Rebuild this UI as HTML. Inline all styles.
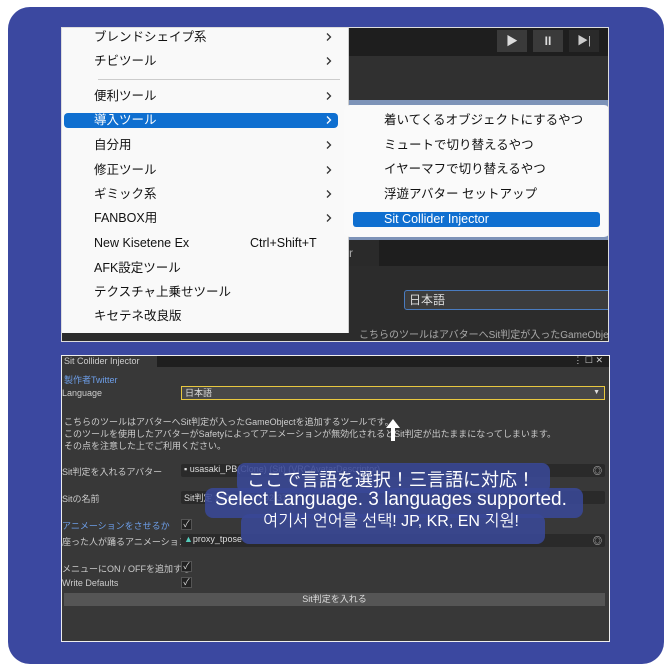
<!DOCTYPE html><html><head><meta charset="utf-8"><style>
*{margin:0;padding:0;box-sizing:border-box}
body{width:670px;height:670px;background:#fff;position:relative;overflow:hidden;font-family:"Liberation Sans","Noto Sans CJK JP",sans-serif}
.a{position:absolute}
.frame{left:8px;top:7px;width:656px;height:657px;background:#3b48a0;border-radius:22px}
.top{left:61px;top:27px;width:548px;height:315px;background:#2c2c2c;border:1px solid #ddd;overflow:hidden}
.menu{left:0;top:0;width:287px;height:305px;background:#f9f9f9;border-right:1px solid #ccc}
.mi{position:absolute;left:32px;font-size:12.5px;line-height:16px;color:#111;white-space:nowrap}
.ar{position:absolute;left:262px;width:10px;height:16px}
.sub{left:282px;top:77px;width:266px;height:132px;background:#fafafa;border-radius:6px}
.si{position:absolute;left:40px;font-size:12.5px;line-height:16px;color:#111;white-space:nowrap}
.bot{left:61px;top:355px;width:549px;height:287px;background:#383838;border:1px solid #eee;font-size:9px;color:#ccc;overflow:hidden}
.t{position:absolute;white-space:nowrap}
.field{position:absolute;left:119px;height:13px;background:#2a2a2a;border-radius:2px}
.cb{position:absolute;left:119px;width:11px;height:11px;background:#222;border:1px solid #555;font-size:9px;line-height:9px;text-align:center;color:#ddd}
.bubble{position:absolute;background:rgba(57,72,150,.88);border-radius:8px}
.bt{position:absolute;left:0;width:548px;text-align:center;color:#fff;padding-left:110px;white-space:nowrap}
</style></head><body>
<svg width="0" height="0" style="position:absolute"><defs><symbol id="chev" viewBox="0 0 10 16"><path d="M3 4.5 L6.5 8 L3 11.5" fill="none" stroke="currentColor" stroke-width="1.3"/></symbol></defs></svg>
<div class="a frame"></div>
<div class="a top">
 <div class="a" style="left:287px;top:0;width:261px;height:28px;background:#1e1e1e"></div>
 <div class="a" style="left:435px;top:2px;width:30px;height:22px;background:#3a3a3a;color:#ddd;font-size:12px;text-align:center;line-height:22px">▶</div>
 <div class="a" style="left:471px;top:2px;width:30px;height:22px;background:#3a3a3a;color:#ddd;font-size:12px;text-align:center;line-height:22px;font-weight:bold">II</div>
 <div class="a" style="left:507px;top:2px;width:30px;height:22px;background:#2a2a2a;color:#ccc;font-size:11px;text-align:center;line-height:22px">▶|</div>
 <div class="a" style="left:287px;top:28px;width:261px;height:44px;background:#303030"></div>
 <div class="a" style="left:287px;top:72px;width:261px;height:6px;background:#7d93b8"></div>
 <div class="a" style="left:287px;top:206px;width:261px;height:6px;background:#7d93b8"></div>
 <div class="a" style="left:287px;top:212px;width:30px;height:26px;background:#2a2a2a;color:#aaa;font-size:12px;line-height:26px">r</div>
 <div class="a" style="left:317px;top:212px;width:231px;height:26px;background:#1e1e1e"></div>
 <div class="a" style="left:342px;top:262px;width:210px;height:20px;background:#3c3c3c;border:1px solid #4a7cc0;border-radius:3px;color:#ddd;font-size:12px;line-height:18px;padding-left:4px">日本語</div>
 <div class="a" style="left:287px;top:298px;width:261px;height:20px;color:#aaa;font-size:10px;padding-left:10px;white-space:nowrap">こちらのツールはアバターへSit判定が入ったGameObjectを追加するツ</div>
 <div class="a menu">
  <div class="mi" style="top:1px">ブレンドシェイプ系</div><svg class="ar" style="top:1px;color:#333"><use href="#chev"/></svg>
  <div class="mi" style="top:25px">チビツール</div><svg class="ar" style="top:25px;color:#333"><use href="#chev"/></svg>
  <div class="a" style="left:36px;top:51px;width:242px;height:1px;background:#ccc"></div>
  <div class="mi" style="top:60px">便利ツール</div><svg class="ar" style="top:60px;color:#333"><use href="#chev"/></svg>
  <div class="a" style="left:2px;top:85px;width:274px;height:15px;background:#0f6fd0;border-radius:4px"></div>
  <div class="mi" style="top:84px;color:#fff">導入ツール</div><svg class="ar" style="top:84px;color:#fff"><use href="#chev"/></svg>
  <div class="mi" style="top:109px">自分用</div><svg class="ar" style="top:109px;color:#333"><use href="#chev"/></svg>
  <div class="mi" style="top:134px">修正ツール</div><svg class="ar" style="top:134px;color:#333"><use href="#chev"/></svg>
  <div class="mi" style="top:158px">ギミック系</div><svg class="ar" style="top:158px;color:#333"><use href="#chev"/></svg>
  <div class="mi" style="top:182px">FANBOX用</div><svg class="ar" style="top:182px;color:#333"><use href="#chev"/></svg>
  <div class="mi" style="top:207px">New Kisetene Ex</div><div class="mi" style="top:207px;left:188px">Ctrl+Shift+T</div>
  <div class="mi" style="top:232px">AFK設定ツール</div>
  <div class="mi" style="top:256px">テクスチャ上乗せツール</div>
  <div class="mi" style="top:280px">キセテネ改良版</div>
 </div>
 <div class="a sub">
  <div class="si" style="top:7px">着いてくるオブジェクトにするやつ</div>
  <div class="si" style="top:32px">ミュートで切り替えるやつ</div>
  <div class="si" style="top:56px">イヤーマフで切り替えるやつ</div>
  <div class="si" style="top:81px">浮遊アバター セットアップ</div>
  <div class="a" style="left:9px;top:107px;width:247px;height:15px;background:#0f6fd0;border-radius:3px"></div>
  <div class="si" style="top:106px;color:#fff">Sit Collider Injector</div>
 </div>
</div>
<div class="a bot">
 <div class="a" style="left:0;top:0;width:548px;height:11px;background:#1f1f1f"></div>
 <div class="a" style="left:0;top:0;width:95px;height:11px;background:#383838"></div>
 <div class="t" style="left:2px;top:0">Sit Collider Injector</div>
 <div class="t" style="right:6px;top:-1px">⋮ ☐ ✕</div>
 <div class="t" style="left:2px;top:17px;color:#6d9ee8">製作者Twitter</div>
 <div class="t" style="left:0;top:32px">Language</div>
 <div class="a" style="left:119px;top:30px;width:424px;height:14px;background:#484848;border:1px solid #e8c840;color:#ddd;padding-left:3px;line-height:12px">日本語<span style="position:absolute;right:4px;font-size:7px">▼</span></div>
 <div class="t" style="left:2px;top:60px;line-height:12px">こちらのツールはアバターへSit判定が入ったGameObjectを追加するツールです。<br>このツールを使用したアバターがSafetyによってアニメーションが無効化されるとSit判定が出たままになってしまいます。<br>その点を注意した上でご利用ください。</div>
 <div class="t" style="left:0;top:109px">Sit判定を入れるアバター</div>
 <div class="field" style="top:108px;width:424px;padding-left:3px;color:#ddd">▪ usasaki_PB(Clone) (Sit) (VRCAvatarDescriptor)<span style="position:absolute;right:3px">◎</span></div>
 <div class="t" style="left:0;top:136px">Sitの名前</div>
 <div class="field" style="top:135px;width:424px;padding-left:3px;color:#ddd">Sit判定 2024-04-20-02-37</div>
 <div class="t" style="left:0;top:163px;color:#6d9ee8">アニメーションをさせるか</div>
 <div class="cb" style="top:163px">✓</div>
 <div class="t" style="left:0;top:179px">座った人が踊るアニメーション</div>
 <div class="field" style="top:178px;width:424px;padding-left:3px;color:#ddd"><span style="color:#5cb">▲</span>proxy_tpose<span style="position:absolute;right:3px">◎</span></div>
 <div class="t" style="left:0;top:206px">メニューにON / OFFを追加する</div>
 <div class="cb" style="top:205px">✓</div>
 <div class="t" style="left:0;top:222px">Write Defaults</div>
 <div class="cb" style="top:221px">✓</div>
 <div class="a" style="left:2px;top:237px;width:541px;height:13px;background:#555;text-align:center;line-height:13px;color:#ddd">Sit判定を入れる</div>
 <svg class="a" style="left:323px;top:62px" width="16" height="24" viewBox="0 0 16 24"><path d="M8 1 L15 10 L10 10 L10 23 L6 23 L6 10 L1 10 Z" fill="#fff"/></svg>
 <div class="bubble" style="left:175px;top:107px;width:313px;height:30px"></div>
 <div class="bubble" style="left:143px;top:132px;width:378px;height:30px"></div>
 <div class="bubble" style="left:179px;top:158px;width:304px;height:30px"></div>
 <div class="bt" style="top:114px;font-size:18px;line-height:20px">ここで言語を選択！三言語に対応！</div>
 <div class="bt" style="top:133px;font-size:19px;line-height:22px">Select Language. 3 languages supported.</div>
 <div class="bt" style="top:156px;font-size:16px;line-height:20px;font-family:'Liberation Sans','NanumGothic','Noto Sans CJK KR',sans-serif">여기서 언어를 선택! JP, KR, EN 지원!</div>
</div>
</body></html>
